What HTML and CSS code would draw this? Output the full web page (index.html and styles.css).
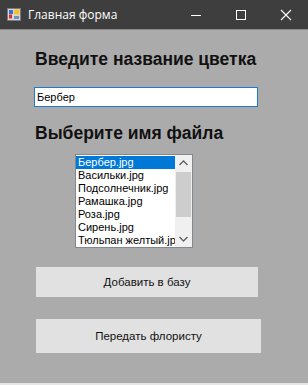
FILE: index.html
```html
<!DOCTYPE html>
<html lang="ru">
<head>
    <meta charset="UTF-8">
    <title>Главная форма</title>
    <link rel="stylesheet" href="styles.css">
</head>
<body>
    <div class="window">
        <div class="titlebar">
            <svg class="app-icon" width="14" height="13" viewBox="0 0 14 13">
                <rect x="0.5" y="0.5" width="13" height="12" fill="#d8d8d8" stroke="#7a7a7a"/>
                <rect x="2" y="2" width="4" height="4" fill="#3a6fd1"/>
                <rect x="7" y="1.5" width="5.5" height="5" fill="#f2c12e"/>
                <rect x="2" y="6.5" width="3" height="4" fill="#d9302b"/>
                <rect x="7" y="8" width="5" height="3" fill="#6e8fc7"/>
            </svg>
            <span class="title">Главная форма</span>
            <div class="controls">
                <svg class="ctl" width="12" height="12" viewBox="0 0 12 12"><line x1="1" y1="6.5" x2="11" y2="6.5" stroke="#fff"/></svg>
                <svg class="ctl" width="12" height="12" viewBox="0 0 12 12"><rect x="1.5" y="1.5" width="9" height="9" fill="none" stroke="#fff"/></svg>
                <svg class="ctl" width="12" height="12" viewBox="0 0 12 12"><path d="M1 1 L11 11 M11 1 L1 11" stroke="#fff" stroke-width="1.1"/></svg>
            </div>
        </div>

        <div class="form">
            <h2 class="heading first">Введите название цветка</h2>
            <div class="textbox">Бербер</div>

            <h2 class="heading second">Выберите имя файла</h2>
            <div class="listbox">
                <div class="items">
                    <div class="item selected">Бербер.jpg</div>
                    <div class="item">Васильки.jpg</div>
                    <div class="item">Подсолнечник.jpg</div>
                    <div class="item">Рамашка.jpg</div>
                    <div class="item">Роза.jpg</div>
                    <div class="item">Сирень.jpg</div>
                    <div class="item">Тюльпан желтый.jpg</div>
                </div>
                <div class="scrollbar">
                    <svg class="arrow" width="17" height="17" viewBox="0 0 17 17"><path d="M4.5 10 L8.5 6 L12.5 10" fill="none" stroke="#606060" stroke-width="1.3"/></svg>
                    <div class="track"><div class="thumb"></div></div>
                    <svg class="arrow" width="17" height="17" viewBox="0 0 17 17"><path d="M4.5 7 L8.5 11 L12.5 7" fill="none" stroke="#606060" stroke-width="1.3"/></svg>
                </div>
            </div>

            <button class="btn add">Добавить в базу</button>
            <button class="btn send">Передать флористу</button>
        </div>
    </div>
</body>
</html>
```

FILE: styles.css
```css
body {
    margin: 0;
    padding: 0;
    font-family: "Liberation Sans", Arial, sans-serif;
    background-color: #ababab;
}

.window {
    width: 308px;
    height: 385px;
    box-sizing: border-box;
    background-color: #ababab;
    border-bottom: 2px solid #e6e6e6;
    overflow: hidden;
}

.titlebar {
    height: 29px;
    display: flex;
    align-items: center;
    background-color: #3e3e3e;
    border-bottom: 1px solid #8a8a8a;
    color: white;
}

.app-icon {
    margin-left: 7px;
    margin-right: 7px;
}

.title {
    font-family: "Open Sans", "Liberation Sans", sans-serif;
    font-size: 12px;
}

.controls {
    margin-left: auto;
    display: flex;
}

.ctl {
    width: 12px;
    margin-left: 33px;
}

.controls .ctl:last-child {
    margin-right: 16px;
}

.form {
    display: flex;
    flex-direction: column;
    align-items: flex-start;
}

.heading {
    margin: 0 0 0 35px;
    font-size: 17.5px;
    line-height: 20px;
    font-weight: bold;
    color: #111;
}

.heading.first {
    margin-top: 19px;
}

.heading.second {
    margin-top: 16px;
}

.textbox {
    margin: 18px 0 0 34px;
    width: 224px;
    height: 20px;
    box-sizing: border-box;
    border: 1px solid #1e7ad0;
    background: white;
    font-size: 11px;
    line-height: 18px;
    padding-left: 2px;
    color: #000;
}

.listbox {
    margin: 11px 0 0 75px;
    width: 118px;
    height: 94px;
    box-sizing: border-box;
    border: 1px solid #828790;
    background: white;
    display: flex;
}

.items {
    flex: 1;
    overflow: hidden;
    padding-top: 1px;
}

.item {
    height: 13px;
    font-size: 11px;
    line-height: 13px;
    padding-left: 2px;
    white-space: nowrap;
    color: #000;
}

.item.selected {
    background-color: #0078d7;
    color: white;
}

.scrollbar {
    width: 17px;
    display: flex;
    flex-direction: column;
    background-color: #f0f0f0;
}

.arrow {
    flex: none;
}

.track {
    flex: 1;
    padding: 0 1px;
}

.thumb {
    height: 45px;
    background-color: #cdcdcd;
}

.btn {
    font-family: "Liberation Sans", Arial, sans-serif;
    font-size: 11.5px;
    color: #111;
    background-color: #e1e1e1;
    border: none;
    padding: 0;
    margin-left: 36px;
}

.btn.add {
    margin-top: 19px;
    width: 222px;
    height: 30px;
}

.btn.send {
    margin-top: 22px;
    width: 225px;
    height: 34px;
}
```
